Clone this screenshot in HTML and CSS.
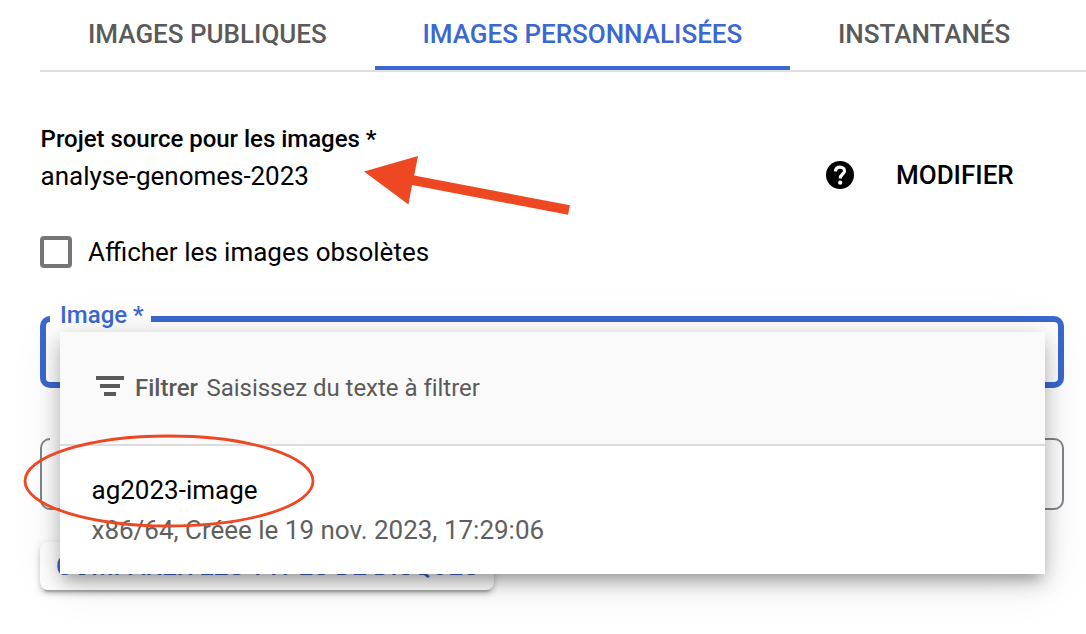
FILE: index.html
```html
<!DOCTYPE html>
<html lang="fr">
<head>
<meta charset="utf-8">
<title>Images</title>
<link rel="stylesheet" href="styles.css">
</head>
<body>
<main class="panel">
  <nav class="tabs">
    <div class="tab"><span>IMAGES PUBLIQUES</span></div>
    <div class="tab tab-active"><span>IMAGES PERSONNALISÉES</span></div>
    <div class="tab"><span>INSTANTANÉS</span></div>
  </nav>

  <section class="project">
    <div class="project-info">
      <div class="project-label"><span>Projet source pour les images *</span></div>
      <div class="project-value"><span>analyse-genomes-2023</span></div>
    </div>
    <svg class="help" viewBox="0 0 28 28"><circle cx="14" cy="14" r="14"/><path d="M9.400 10.300C9.600 7.800 11.500 6.200 14 6.200C16.600 6.200 18.500 7.900 18.500 10C18.500 13 14.200 13.100 14.200 17.600" fill="none" stroke="#fff" stroke-width="3.200"/><circle cx="14.200" cy="21.700" r="2.100" fill="#fff"/></svg>
    <div class="edit"><span>MODIFIER</span></div>
  </section>

  <label class="check"><i class="box"></i><span>Afficher les images obsolètes</span></label>

  <div class="field field-active">
    <div class="lead"></div>
    <div class="notch"><span>Image *</span></div>
    <div class="trail"></div>
  </div>
  <div class="field field-idle">
    <div class="lead"></div>
    <div class="notch"></div>
    <div class="trail"></div>
  </div>
  <div class="compare"><span>COMPARER LES TYPES DE DISQUES</span></div>
</main>

<div class="menu">
  <div class="filter">
    <svg class="filter-icon" viewBox="0 0 28 20"><path d="M0 0h28v4H0zM4 8h20v4H4zM8 16h12v4H8z"/></svg>
    <span class="filter-name">Filtrer</span>
    <span class="filter-hint">Saisissez du texte à filtrer</span>
  </div>
  <div class="option">
    <div class="option-name"><span>ag2023-image</span></div>
    <div class="option-meta"><span>x86/64, Créée le 19 nov. 2023, 17:29:06</span></div>
  </div>
</div>

<svg class="marks" viewBox="0 0 1086 634">
  <path d="M364 171.500L418 156L414.200 175.500L570 205.300L568 214.800L412 185L408.500 204.500Z" fill="#ee4823"/>
  <ellipse cx="169" cy="481" rx="144" ry="45" fill="none" stroke="#ee4823" stroke-width="2.800"/>
</svg>
</body>
</html>
```
FILE: styles.css
```css
* { box-sizing: border-box; }
body {
  margin: 0;
  width: 1086px;
  height: 634px;
  overflow: hidden;
  position: relative;
  background: #fff;
  color: #000;
  font: 400 26px/32px Roboto, sans-serif;
}
.panel { padding-left: 40px; }
span { white-space: nowrap; }
.tabs { display: flex; height: 72px; border-bottom: 2px solid #e0e0e0; font-weight: 500; color: #5a5a5a; }
.tab { padding: 18px 48px 0; height: 70px; flex: none; width: 335px; }
.tab-active { width: 415px; padding-left: 47.4px; color: #3b68d0; border-bottom: 4px solid #3b68d0; }
.project { display: flex; height: 164px; padding-top: 50px; }
.project-info { width: 786px; padding-left: .6px; }
.project-label { font-size: 24px; font-weight: 500; line-height: 34px; letter-spacing: -.02px; }
.project-value { line-height: 40px; letter-spacing: -.03px; }
.help { width: 28px; height: 28px; margin-top: 39px; flex: none; }
.edit { margin: 37px 0 0 42px; font-weight: 500; }
.check { display: flex; gap: 16px; height: 32px; }
.box { width: 32px; height: 32px; border: 4px solid #757575; border-radius: 4px; }
.field { display: flex; width: 1024px; height: 72px; }
.field-active { --line: 6px solid #3b68d0; margin-top: 48px; color: #3b68d0; font-size: 24px; font-weight: 500; }
.field-idle { --line: 2px solid #80868b; margin-top: 50px; }
.lead { width: 10px; border: var(--line); border-right: 0; border-radius: 10px 0 0 10px; }
.notch { width: 101px; padding-left: 10px; border-bottom: var(--line); }
.notch span { display: block; margin-top: -17px; }
.trail { flex: 1; border: var(--line); border-left: 0; border-radius: 0 10px 10px 0; }
.compare {
  width: 454px;
  height: 48px;
  margin-top: 32px;
  padding: 8px 16px;
  border-radius: 8px;
  color: #3b68d0;
  font-weight: 500;
  background: #fff;
  box-shadow: 0 6px 2px -4px rgba(0,0,0,.2), 0 4px 4px rgba(0,0,0,.14), 0 2px 10px rgba(0,0,0,.12);
}
.menu {
  position: absolute;
  left: 60px;
  top: 332px;
  width: 985px;
  height: 242px;
  background: #fff;
  box-shadow: 0 10px 10px -6px rgba(0,0,0,.16), 0 8px 20px rgba(0,0,0,.26), 0 6px 50px 2px rgba(0,0,0,.08);
}
.filter { display: flex; height: 114px; padding: 40px 36px 0; background: #fafafa; border-bottom: 2px solid #dcdcdc; color: #5a5a5a; font-size: 24px; }
.filter-icon { width: 28px; height: 20px; margin: 4px 11px 0 0; fill: #5a5a5a; }
.filter-name { font-weight: 500; margin-right: 8.500px; }
.filter-hint { letter-spacing: -.03px; }
.option { padding: 24px 32px 0 31.5px; }
.option-name { line-height: 40px; }
.option-meta { line-height: 40px; color: #5f5f5f; letter-spacing: -.01px; }
.marks { position: absolute; left: 0; top: 0; width: 1086px; height: 634px; }
```
